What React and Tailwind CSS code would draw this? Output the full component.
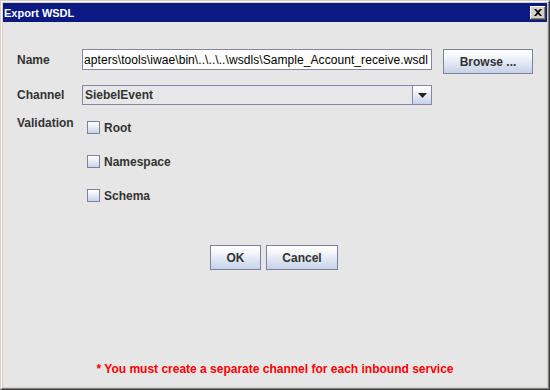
import React from "react";

const btnBg =
  "bg-[linear-gradient(to_bottom,#ffffff_0%,#f6f8fc_25%,#e2e9f5_55%,#c6d1e8_100%)]";

function Checkbox({ label }) {
  return (
    <div className="flex items-center h-[13px] gap-[4px]">
      <div className="w-[13px] h-[13px] border border-[#7d809e] bg-[linear-gradient(to_bottom,#ffffff_0%,#eef2f9_35%,#c9d4ea_100%)]" />
      <span className="font-bold text-[12px] leading-[14px] text-[#333333]">{label}</span>
    </div>
  );
}

export default function App() {
  return (
    <div className="w-[550px] h-[390px] font-['Liberation_Sans',Arial,sans-serif] border border-t-[#d4d0c8] border-l-[#d4d0c8] border-r-[#404040] border-b-[#404040]">
      <div className="h-full border border-t-white border-l-white border-r-[#808080] border-b-[#808080]">
        <div className="h-full border border-[#d4d0c8] flex flex-col">
          {/* Title bar */}
          <div className="h-[19px] bg-[#0a1a82] flex items-center justify-between pl-[1px] pr-[1px]">
            <span className="text-white font-bold text-[11px] leading-[13px] pt-[1px]">Export WSDL</span>
            <div className="w-[16px] h-[14px] bg-[#d4d0c8] flex items-center justify-center shadow-[inset_-1px_-1px_#404040,inset_1px_1px_#ffffff,inset_-2px_-2px_#808080]">
              <svg width="8" height="7" viewBox="0 0 8 7" className="-mt-[1px]">
                <path d="M0 0h2l2 2 2-2h2L5 3.5 8 7H6L4 5 2 7H0l3-3.5z" fill="#000" />
              </svg>
            </div>
          </div>

          {/* Content */}
          <div className="flex-1 bg-[#e6e6e6] flex flex-col text-[#333333]">
            {/* Name row */}
            <div className="flex items-start pl-[14px] pt-[27px]">
              <div className="w-[65px] h-[21px] flex items-center font-bold text-[12px]">Name</div>
              <div className="w-[350px] h-[21px] border border-[#8586a3] bg-white overflow-hidden flex items-center pl-[1px]">
                <span className="whitespace-nowrap text-[12px] text-black leading-[14px] tracking-[0.07px]">
                  apters\tools\iwae\bin\..\..\..\wsdls\Sample_Account_receive.wsdl
                </span>
              </div>
              <button className={`ml-[11px] w-[90px] h-[25px] border border-[#7d809e] ${btnBg} font-bold text-[12px] text-[#333333] flex items-center justify-center`}>
                Browse ...
              </button>
            </div>

            {/* Channel row */}
            <div className="flex items-center pl-[14px] mt-[11px]">
              <div className="w-[65px] h-[20px] flex items-center font-bold text-[12px]">Channel</div>
              <div className="w-[350px] h-[20px] border border-[#8586a3] flex">
                <div className="flex-1 bg-[#e7e7ea] flex items-center pl-[2px] font-bold text-[12px] text-[#333333]">
                  SiebelEvent
                </div>
                <div className={`w-[19px] h-full border-l border-[#8586a3] ${btnBg} flex items-center justify-center`}>
                  <svg width="9" height="5" viewBox="0 0 9 5">
                    <path d="M0 0h9L4.5 5z" fill="#222" />
                  </svg>
                </div>
              </div>
            </div>

            {/* Validation row */}
            <div className="flex items-start pl-[14px] mt-[11px]">
              <div className="w-[70px] h-[14px] leading-[14px] font-bold text-[12px]">Validation</div>
              <div className="flex flex-col gap-[21px] pt-[5px]">
                <Checkbox label="Root" />
                <Checkbox label="Namespace" />
                <Checkbox label="Schema" />
              </div>
            </div>

            {/* Buttons */}
            <div className="flex justify-center gap-[5px] mt-[43px] pr-[2px]">
              <button className={`w-[51px] h-[25px] border border-[#7d809e] ${btnBg} font-bold text-[12px] text-[#333333] flex items-center justify-center`}>
                OK
              </button>
              <button className={`w-[72px] h-[25px] border border-[#7d809e] ${btnBg} font-bold text-[12px] text-[#333333] flex items-center justify-center`}>
                Cancel
              </button>
            </div>

            {/* Note */}
            <div className="mt-auto pb-[11px] text-center font-bold text-[12px] leading-[14px] text-[#ff0000]">
              * You must create a separate channel for each inbound service
            </div>
          </div>
        </div>
      </div>
    </div>
  );
}
